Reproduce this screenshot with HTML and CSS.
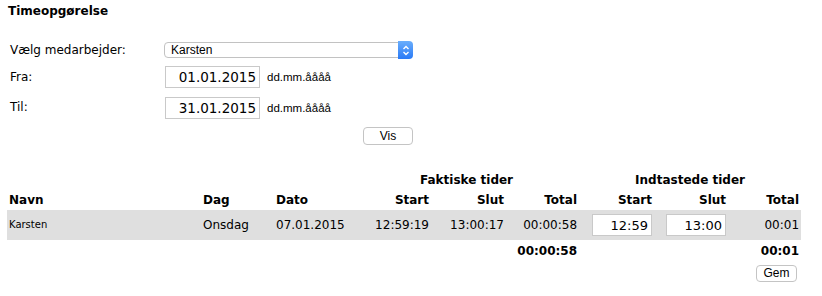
FILE: index.html
```html
<!DOCTYPE html>
<html lang="da">
<head>
    <meta charset="UTF-8">
    <meta name="viewport" content="width=device-width, initial-scale=1.0">
    <title>Timeopgørelse</title>
    <link rel="stylesheet" href="styles.css">
</head>
<body>
<div class="page">
    <h1 class="title">Timeopgørelse</h1>

    <!-- Filter -->
    <form class="filter" onsubmit="return false">
        <label class="filter-label" for="employee">Vælg medarbejder:</label>
        <div class="select-wrap">
            <select class="select" id="employee">
                <option>Karsten</option>
            </select>
            <span class="select-arrow">
                <svg width="8" height="11" viewBox="0 0 8 11">
                    <path d="M1.5 4 L4 1.5 L6.5 4 M1.5 7 L4 9.5 L6.5 7" fill="none" stroke="#fff" stroke-width="1.4"/>
                </svg>
            </span>
        </div>

        <label class="filter-label label-fra" for="from">Fra:</label>
        <div class="date-field">
            <input class="date-input" id="from" type="text" value="01.01.2015">
            <span class="date-hint">dd.mm.åååå</span>
        </div>

        <label class="filter-label label-til" for="to">Til:</label>
        <div class="date-field">
            <input class="date-input" id="to" type="text" value="31.01.2015">
            <span class="date-hint">dd.mm.åååå</span>
        </div>

        <div class="filter-actions">
            <button class="btn btn-vis">Vis</button>
        </div>
    </form>

    <!-- Resultat -->
    <table class="report">
        <colgroup>
            <col style="width:194px">
            <col style="width:73px">
            <col style="width:80px">
            <col style="width:77px">
            <col style="width:75px">
            <col style="width:73px">
            <col style="width:75px">
            <col style="width:74px">
            <col style="width:73px">
        </colgroup>
        <tr class="row-group">
            <th colspan="3"></th>
            <th colspan="3" class="center">Faktiske tider</th>
            <th colspan="3" class="center">Indtastede tider</th>
        </tr>
        <tr class="row-head">
            <th class="left">Navn</th>
            <th class="left">Dag</th>
            <th class="left">Dato</th>
            <th>Start</th>
            <th>Slut</th>
            <th>Total</th>
            <th>Start</th>
            <th>Slut</th>
            <th>Total</th>
        </tr>
        <tr class="row-data">
            <td class="left name">Karsten</td>
            <td class="left">Onsdag</td>
            <td class="left">07.01.2015</td>
            <td>12:59:19</td>
            <td>13:00:17</td>
            <td>00:00:58</td>
            <td><input class="time-input" type="text" value="12:59"></td>
            <td><input class="time-input" type="text" value="13:00"></td>
            <td>00:01</td>
        </tr>
        <tr class="row-total">
            <td colspan="5"></td>
            <td>00:00:58</td>
            <td colspan="2"></td>
            <td>00:01</td>
        </tr>
        <tr class="row-save">
            <td colspan="8"></td>
            <td><button class="btn btn-gem">Gem</button></td>
        </tr>
    </table>
</div>
</body>
</html>
```

FILE: styles.css
```css
body {
    font-family: "DejaVu Sans", Verdana, sans-serif;
    font-size: 12px;
    color: #000;
    background: #fff;
    margin: 0;
}

.page {
    padding: 4px 0 0 8px;
}

.title {
    font-size: 12px;
    font-weight: bold;
    line-height: 14px;
    margin: 0;
}

/* Filter */

.filter {
    display: grid;
    grid-template-columns: 156px 249px;
    grid-template-rows: 16px 23px 22px 18px;
    row-gap: 8px;
    margin-top: 24px;
    align-items: center;
}

.filter-label {
    padding-left: 2px;
    line-height: 14px;
}

.label-fra {
    align-self: start;
    padding-top: 4px;
}

.label-til {
    align-self: start;
    padding-top: 3px;
}

.select-wrap {
    position: relative;
    height: 16px;
}

.select {
    -webkit-appearance: none;
    appearance: none;
    width: 249px;
    height: 16px;
    margin: 0;
    padding: 0 0 0 6px;
    border: 1px solid #c2c2c2;
    border-radius: 4px;
    background: #fff;
    font-family: "Liberation Sans", Arial, sans-serif;
    font-size: 12px;
    line-height: 14px;
    color: #000;
    box-sizing: border-box;
}

.select-arrow {
    position: absolute;
    right: 0;
    top: -1px;
    width: 15px;
    height: 18px;
    border-radius: 0 4px 4px 0;
    background: linear-gradient(#6aaefc, #2a7af6);
    display: flex;
    align-items: center;
    justify-content: center;
}

.date-field {
    display: flex;
    align-items: center;
    align-self: start;
}

.date-input {
    width: 95px;
    height: 22px;
    margin: 0 0 0 1px;
    padding: 0 3px 0 0;
    border: 1px solid #c9c9c9;
    box-sizing: border-box;
    text-align: right;
    font-family: "DejaVu Sans", Verdana, sans-serif;
    font-size: 13.5px;
    color: #000;
}

.date-hint {
    margin-left: 7px;
    font-family: "Liberation Sans", Arial, sans-serif;
    font-size: 11.5px;
}

.filter-actions {
    grid-column: 2;
    display: flex;
    justify-content: flex-end;
}

.btn {
    background: #fff;
    border: 1px solid #c4c4c4;
    border-radius: 4px;
    font-family: "Liberation Sans", Arial, sans-serif;
    font-size: 12px;
    color: #000;
    padding: 0;
    box-sizing: border-box;
    cursor: pointer;
}

.btn-vis {
    width: 50px;
    height: 18px;
}

.btn-gem {
    width: 41px;
    height: 17px;
    margin-right: 2px;
}

/* Tabel */

.report {
    table-layout: fixed;
    border-collapse: collapse;
    width: 794px;
    margin: 25px 0 0 -1px;
}

.report th,
.report td {
    padding: 0 2px;
    line-height: 14px;
    text-align: right;
    vertical-align: middle;
    white-space: nowrap;
}

.report th {
    font-weight: bold;
}

.report .left {
    text-align: left;
}

.report .center {
    text-align: center;
}

.row-group {
    height: 20px;
}

.row-head {
    height: 20px;
}

.row-data {
    height: 30px;
    background: #dfdfdf;
}

.row-data .name {
    font-size: 10px;
}

.row-total {
    height: 22px;
}

.row-total td {
    font-weight: bold;
}

.row-save {
    height: 22px;
}

.time-input {
    width: 60px;
    height: 22px;
    margin: 0;
    padding: 0 3px 0 0;
    border: 1px solid #c9c9c9;
    box-sizing: border-box;
    text-align: right;
    font-family: "DejaVu Sans", Verdana, sans-serif;
    font-size: 13px;
    color: #000;
    background: #fff;
}
```
